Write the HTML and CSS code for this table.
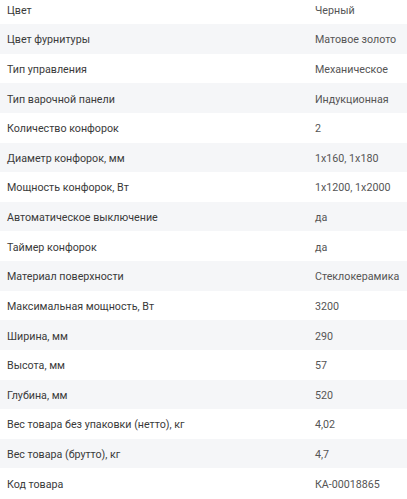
FILE: index.html
```html
<!DOCTYPE html>
<html lang="ru">
<head>
<meta charset="utf-8">
<link rel="stylesheet" href="styles.css">
</head>
<body>
<div class="specs">
  <div class="row"><span class="label">Цвет</span><span class="value">Черный</span></div>
  <div class="row"><span class="label">Цвет фурнитуры</span><span class="value">Матовое золото</span></div>
  <div class="row"><span class="label">Тип управления</span><span class="value">Механическое</span></div>
  <div class="row"><span class="label">Тип варочной панели</span><span class="value">Индукционная</span></div>
  <div class="row"><span class="label">Количество конфорок</span><span class="value">2</span></div>
  <div class="row"><span class="label">Диаметр конфорок, мм</span><span class="value">1x160, 1x180</span></div>
  <div class="row"><span class="label">Мощность конфорок, Вт</span><span class="value">1x1200, 1x2000</span></div>
  <div class="row"><span class="label">Автоматическое выключение</span><span class="value">да</span></div>
  <div class="row"><span class="label">Таймер конфорок</span><span class="value">да</span></div>
  <div class="row"><span class="label">Материал поверхности</span><span class="value">Стеклокерамика</span></div>
  <div class="row"><span class="label">Максимальная мощность, Вт</span><span class="value">3200</span></div>
  <div class="row"><span class="label">Ширина, мм</span><span class="value">290</span></div>
  <div class="row"><span class="label">Высота, мм</span><span class="value">57</span></div>
  <div class="row"><span class="label">Глубина, мм</span><span class="value">520</span></div>
  <div class="row"><span class="label">Вес товара без упаковки (нетто), кг</span><span class="value">4,02</span></div>
  <div class="row"><span class="label">Вес товара (брутто), кг</span><span class="value">4,7</span></div>
  <div class="row"><span class="label">Код товара</span><span class="value">КА-00018865</span></div>
</div>
</body>
</html>
```

FILE: styles.css
```css
html, body {
  margin: 0;
  padding: 0;
  background: #ffffff;
}
body {
  font-family: Roboto, "Noto Sans", sans-serif;
  font-size: 10.7px;
}
.specs {
  margin-top: -5.6px;
  display: flex;
  flex-direction: column;
}
.row {
  height: 29.64px;
  display: grid;
  grid-template-columns: 315px 1fr;
  align-items: center;
}
.row:nth-child(even) {
  background: #f5f6f8;
}
.label,
.value {
  padding-top: 2px;
}
.label {
  padding-left: 7px;
  color: #3a3a3a;
}
.value {
  color: #555555;
  white-space: nowrap;
}
```
